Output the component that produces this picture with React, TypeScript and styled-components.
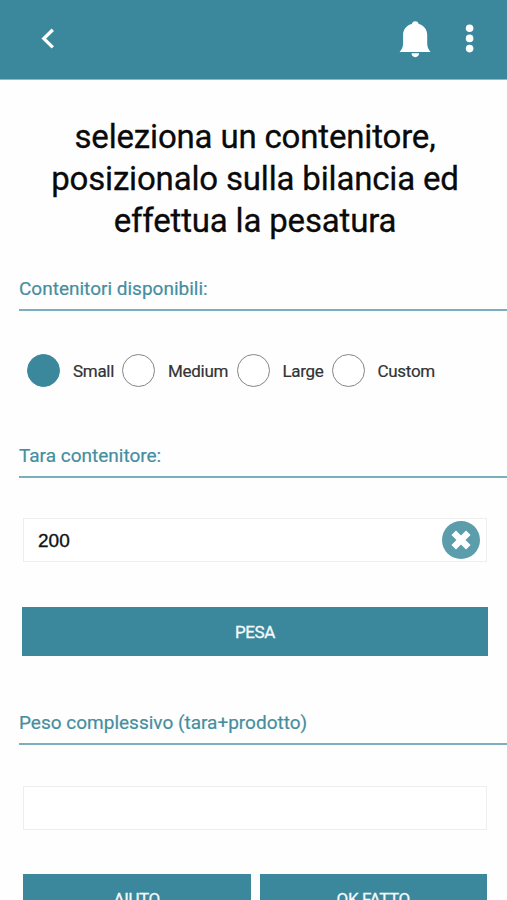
import React, { useState } from "react";
import styled, { createGlobalStyle } from "styled-components";

const teal = "#3b889c";

const GlobalStyle = createGlobalStyle`
  html, body { margin: 0; padding: 0; overflow: hidden; background: #fefefe; }
  * { box-sizing: border-box; }
`;

const Screen = styled.main`
  width: 507px;
  height: 900px;
  overflow: hidden;
  background: #fefefe;
  font-family: Roboto, "Liberation Sans", sans-serif;
  display: flex;
  flex-direction: column;
`;

const TopBar = styled.header`
  flex: none;
  height: 80px;
  background: ${teal};
  border-bottom: 1px solid #8fbac5;
  display: flex;
  align-items: flex-start;
  padding: 18px 28px 0 40px;
`;

const BarButton = styled.button<{ $width: number; $push?: boolean }>`
  width: ${(p) => p.$width}px;
  height: 42px;
  margin-left: ${(p) => (p.$push ? "auto" : "0")};
  padding: 0;
  border: 0;
  background: none;
  color: #fff;
  svg { display: block; }
`;

const Title = styled.h1`
  flex: none;
  margin: 36px 0 0;
  padding-left: 3px;
  height: 126px;
  font-size: 33px;
  line-height: 42px;
  font-weight: 400;
  letter-spacing: -0.17px;
  text-align: center;
  color: #0a0a0a;
  -webkit-text-stroke: 0.3px #0a0a0a;
  white-space: nowrap;
`;

const SectionTitle = styled.h2<{ $top: number }>`
  flex: none;
  margin: ${(p) => p.$top}px 0 0 19px;
  height: 38px;
  padding-bottom: 4px;
  border-bottom: 2px solid #7ab0be;
  font-size: 19px;
  line-height: 32px;
  font-weight: 400;
  color: #458e9f;
  -webkit-text-stroke: 0.2px #458e9f;
  white-space: nowrap;
`;

const RadioGroup = styled.div`
  flex: none;
  display: flex;
  height: 33px;
  margin: 43px 0 0 27px;
`;

const RadioLabel = styled.label<{ $width: number }>`
  width: ${(p) => p.$width}px;
  display: flex;
  align-items: center;
  gap: 13px;
  font-size: 17px;
  letter-spacing: -0.3px;
  line-height: 34px;
  color: #333;
  -webkit-text-stroke: 0.2px #333;
  white-space: nowrap;
`;

const Radio = styled.input`
  appearance: none;
  flex: none;
  width: 33px;
  height: 33px;
  margin: 0;
  border: 1.5px solid #858585;
  border-radius: 50%;
  background: #fff;
  &:checked { background: ${teal}; border-color: ${teal}; }
`;

const Field = styled.div<{ $top: number }>`
  flex: none;
  display: flex;
  align-items: center;
  width: 464px;
  height: 44px;
  margin: ${(p) => p.$top}px 0 0 23px;
  padding: 0 6px 0 14px;
  border: 1.5px solid #eee;
  background: #fff;
`;

const FieldInput = styled.input`
  flex: 1;
  min-width: 0;
  height: 40px;
  padding: 2px 0 0;
  border: 0;
  outline: 0;
  background: none;
  font: 19px/38px "Liberation Sans", sans-serif;
  color: #111;
  -webkit-text-stroke: 0.35px #111;
`;

const ClearButton = styled.button`
  width: 38px;
  height: 38px;
  padding: 0;
  border: 0;
  border-radius: 50%;
  background: #5b9dab;
  svg { display: block; }
`;

const Actions = styled.div<{ $top: number; $inset: number }>`
  flex: none;
  display: flex;
  gap: 9px;
  margin: ${(p) => p.$top}px ${(p) => p.$inset - 3}px 0 ${(p) => p.$inset}px;
`;

const ActionButton = styled.button`
  flex: 1;
  height: 49px;
  padding: 0;
  border: 0;
  background: ${teal};
  font: 400 17px/20px Roboto, sans-serif;
  letter-spacing: -0.4px;
  color: #f4fafb;
  -webkit-text-stroke: 0.3px #f4fafb;
`;

const containers = [
  { name: "Small", width: 95 },
  { name: "Medium", width: 114.5 },
  { name: "Large", width: 95 },
  { name: "Custom", width: 120 },
];

export default function App() {
  const [size, setSize] = useState("Small");
  const [tare, setTare] = useState("200");
  const [weight, setWeight] = useState("");

  return (
    <>
      <GlobalStyle />
      <Screen>
        <TopBar>
          <BarButton $width={20} aria-label="Indietro">
            <svg width="20" height="42" viewBox="0 0 20 42" fill="none" stroke="#fff" strokeWidth="3.3">
              <path d="M12.8 11.800 3.800 20.600l9 8.800" />
            </svg>
          </BarButton>
          <BarButton $width={34} $push aria-label="Notifiche">
            <svg width="34" height="42" viewBox="0 0 34 42" fill="#fff">
              <path d="M17.300 3.200c-1.900 0-3.200 1.200-3.400 2.800C8.300 7.300 5.100 11.600 5.100 17v8.200c0 3.600-1.200 5.800-3.500 8.900h31c-2.300-3.100-3.400-5.300-3.400-8.900V17c0-5.400-3.200-9.700-8.500-11-.2-1.600-1.500-2.800-3.400-2.800z" />
              <path d="M13.500 35.300h7.600c0 2.300-1.500 3.900-3.800 3.900s-3.800-1.600-3.800-3.900z" />
            </svg>
          </BarButton>
          <BarButton $width={47} aria-label="Menu">
            <svg width="47" height="42" viewBox="0 0 47 42" fill="#fff">
              <circle cx="37.600" cy="10.200" r="3.800" />
              <circle cx="37.600" cy="20.400" r="3.800" />
              <circle cx="37.600" cy="30.600" r="3.800" />
            </svg>
          </BarButton>
        </TopBar>

        <Title>
          seleziona un contenitore,
          <br />
          posizionalo sulla bilancia ed
          <br />
          effettua la pesatura
        </Title>

        <SectionTitle $top={31}>Contenitori disponibili:</SectionTitle>
        <RadioGroup>
          {containers.map(({ name, width }) => (
            <RadioLabel key={name} $width={width}>
              <Radio
                type="radio"
                name="container"
                checked={size === name}
                onChange={() => setSize(name)}
              />
              {name}
            </RadioLabel>
          ))}
        </RadioGroup>

        <SectionTitle $top={53}>Tara contenitore:</SectionTitle>
        <Field $top={40}>
          <FieldInput
            aria-label="Tara contenitore"
            value={tare}
            onChange={(e) => setTare(e.target.value)}
          />
          <ClearButton aria-label="Cancella" onClick={() => setTare("")}>
            <svg width="38" height="38" viewBox="0 0 38 38" stroke="#fff" strokeWidth="6.400">
              <path d="M11.700 11.700l14.600 14.600M26.300 11.700L11.700 26.300" />
            </svg>
          </ClearButton>
        </Field>
        <Actions $top={45} $inset={22}>
          <ActionButton>PESA</ActionButton>
        </Actions>

        <SectionTitle $top={51}>Peso complessivo (tara+prodotto)</SectionTitle>
        <Field $top={41}>
          <FieldInput
            aria-label="Peso complessivo"
            value={weight}
            onChange={(e) => setWeight(e.target.value)}
          />
        </Field>
        <Actions $top={44} $inset={23}>
          <ActionButton>AIUTO</ActionButton>
          <ActionButton>OK FATTO</ActionButton>
        </Actions>
      </Screen>
    </>
  );
}
